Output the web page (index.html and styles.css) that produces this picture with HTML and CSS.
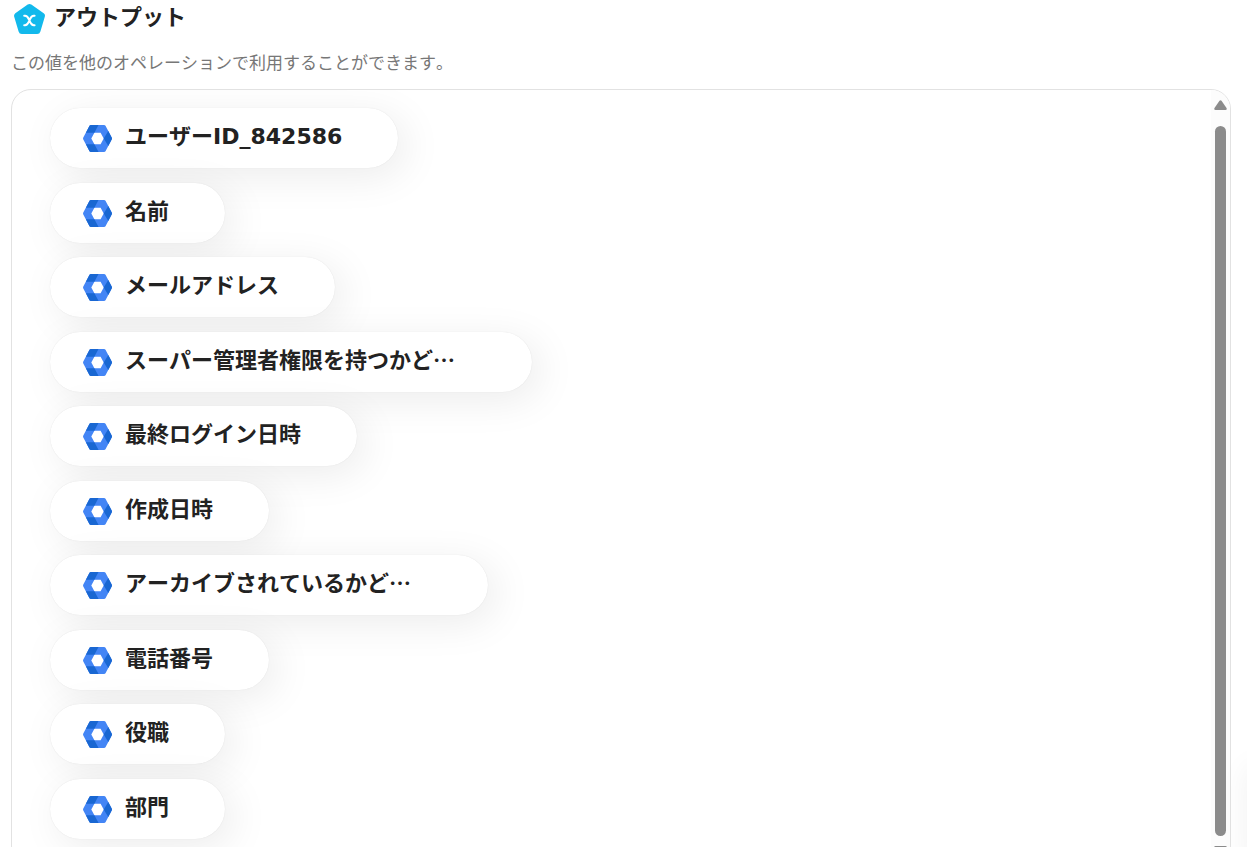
FILE: index.html
```html
<!DOCTYPE html>
<html lang="ja">
<head>
<meta charset="utf-8">
<meta name="viewport" content="width=device-width, initial-scale=1">
<title>アウトプット</title>
<link rel="stylesheet" href="styles.css">
</head>
<body>
<svg class="symbols" aria-hidden="true">
  <symbol id="hex" viewBox="0 0 29 27">
    <path fill="#4385f5" fill-rule="evenodd" d="M8 0H21Q22 0 22.500 .8L28.700 12.500Q29.200 13.500 28.700 14.500L22.500 26.200Q22 27 21 27H8Q7 27 6.500 26.200L.3 14.500Q-.2 13.500 .3 12.500L6.500 .8Q7 0 8 0ZM11.400 7.700L8.300 13.500L11.400 19.200H17.600L20.700 13.500L17.600 7.700Z"/>
    <path fill="#1967d2" d="M8 0H15.500L11.400 7.700H2.900L6.500 .8Q7 0 8 0ZM2.900 19.200H11.400L15.600 27H8Q7 27 6.500 26.200ZM25.300 6L28.700 12.500Q29.200 13.500 28.700 14.500L25.300 21L20.700 13.500Z"/>
  </symbol>
</svg>
<main class="page">
  <header class="heading">
    <svg class="heading-icon" viewBox="0 0 32 32" aria-hidden="true">
      <path fill="#12b9ec" d="M13.700 1.600Q15.500 .4 17.300 1.600L29.700 10.200Q31.500 11.600 30.800 13.700L26.400 28.400Q25.700 31 23.200 31H7.800Q5.300 31 4.600 28.400L.2 13.700Q-.4 11.600 1.300 10.200Z"/>
      <path fill="none" stroke="#fff" stroke-width="2" stroke-linecap="round" d="M10.200 12.800C13.600 11.900 14.200 15 15.400 17.500C16.600 20 17.200 23.100 20.600 22.200M20.600 12.800C17.200 11.900 16.600 15 15.400 17.500C14.200 20 13.600 23.100 10.200 22.200"/>
    </svg>
    <h1 class="title">アウトプット</h1>
  </header>
  <p class="description">この値を他のオペレーションで利用することができます。</p>
  <section class="panel">
    <ul class="outputs">
      <li class="output"><svg class="output-icon" aria-hidden="true"><use href="#hex"/></svg><span class="name">ユーザー<span class="latin">ID_842586</span></span></li>
      <li class="output"><svg class="output-icon" aria-hidden="true"><use href="#hex"/></svg><span class="name">名前</span></li>
      <li class="output"><svg class="output-icon" aria-hidden="true"><use href="#hex"/></svg><span class="name">メールアドレス</span></li>
      <li class="output truncated"><svg class="output-icon" aria-hidden="true"><use href="#hex"/></svg><span class="name">スーパー管理者権限を持つかど…</span></li>
      <li class="output"><svg class="output-icon" aria-hidden="true"><use href="#hex"/></svg><span class="name">最終ログイン日時</span></li>
      <li class="output"><svg class="output-icon" aria-hidden="true"><use href="#hex"/></svg><span class="name">作成日時</span></li>
      <li class="output truncated"><svg class="output-icon" aria-hidden="true"><use href="#hex"/></svg><span class="name">アーカイブされているかど…</span></li>
      <li class="output"><svg class="output-icon" aria-hidden="true"><use href="#hex"/></svg><span class="name">電話番号</span></li>
      <li class="output"><svg class="output-icon" aria-hidden="true"><use href="#hex"/></svg><span class="name">役職</span></li>
      <li class="output"><svg class="output-icon" aria-hidden="true"><use href="#hex"/></svg><span class="name">部門</span></li>
    </ul>
    <div class="scrollbar" aria-hidden="true">
      <svg class="arrow" viewBox="0 0 13 10"><path d="M5.500 .8Q6.500-.4 7.500 .8L12.500 8Q13.300 9.800 11.500 10H1.500Q-.3 9.800 .5 8Z"/></svg>
      <div class="thumb"></div>
      <svg class="arrow" viewBox="0 0 13 10"><path d="M5.500 9.200Q6.500 10.400 7.500 9.200L12.500 2Q13.300 .2 11.500 0H1.500Q-.3 .2 .5 2Z"/></svg>
    </div>
  </section>
  <div class="edge-shade"></div>
</main>
</body>
</html>
```
FILE: styles.css
```css
* {
  box-sizing: border-box;
}

body {
  margin: 0;
  background: #fff;
  color: #222;
  font-family: "Noto Sans CJK JP", sans-serif;
  font-kerning: none;
}

.symbols {
  display: none;
}

.page {
  position: relative;
  height: 100vh;
  overflow: hidden;
  padding: 0 16px 0 11px;
}

.heading {
  display: flex;
  align-items: center;
  gap: 8px;
  height: 38px;
  padding-left: 3px;
}

.heading-icon {
  width: 32px;
  height: 32px;
}

.title {
  margin: 0;
  padding-bottom: 8px;
  font-size: 22px;
  line-height: 30px;
  font-weight: 700;
}

.description {
  margin: 12px 0 15px;
  color: #777;
  font-size: 17px;
  line-height: 24px;
}

.panel {
  display: flex;
  overflow: hidden;
  border: 1px solid #e2e2e2;
  border-radius: 20px;
}

.outputs {
  flex: 1;
  margin: 0;
  padding: 18px 38px 26px;
  list-style: none;
}

.output {
  display: flex;
  align-items: center;
  gap: 13px;
  width: fit-content;
  height: 60px;
  margin-bottom: 14px;
  padding: 0 56px 0 33px;
  border-radius: 30px;
  background: #fff;
  box-shadow: 0 0 1px rgba(0, 0, 0, 0.12), 8px 8px 40px rgba(0, 0, 0, 0.08);
}

.output:nth-child(odd) {
  margin-bottom: 15px;
}

.output:last-child {
  margin-bottom: 0;
}

.truncated {
  padding-right: 77px;
}

.output-icon {
  flex: none;
  width: 29px;
  height: 27px;
}

.name {
  padding-bottom: 8px;
  font-size: 22px;
  line-height: 32px;
  font-weight: 700;
  white-space: nowrap;
}

.latin {
  font-family: "DejaVu Sans", sans-serif;
  line-height: 1;
}

.scrollbar {
  display: flex;
  flex-direction: column;
  align-items: center;
  gap: 10px;
  width: 19px;
  padding: 10px 0 9px;
  background: #fcfcfc;
}

.arrow {
  flex: none;
  width: 13px;
  height: 10px;
  fill: #8b8b8b;
}

.arrow:first-child {
  margin-bottom: 6px;
}

.thumb {
  flex: 1;
  width: 11px;
  border-radius: 6px;
  background: #8b8b8b;
}

.edge-shade {
  position: absolute;
  right: -60px;
  bottom: -20px;
  width: 60px;
  height: 100px;
  box-shadow: 0 0 30px rgba(0, 0, 0, 0.06);
}
```
